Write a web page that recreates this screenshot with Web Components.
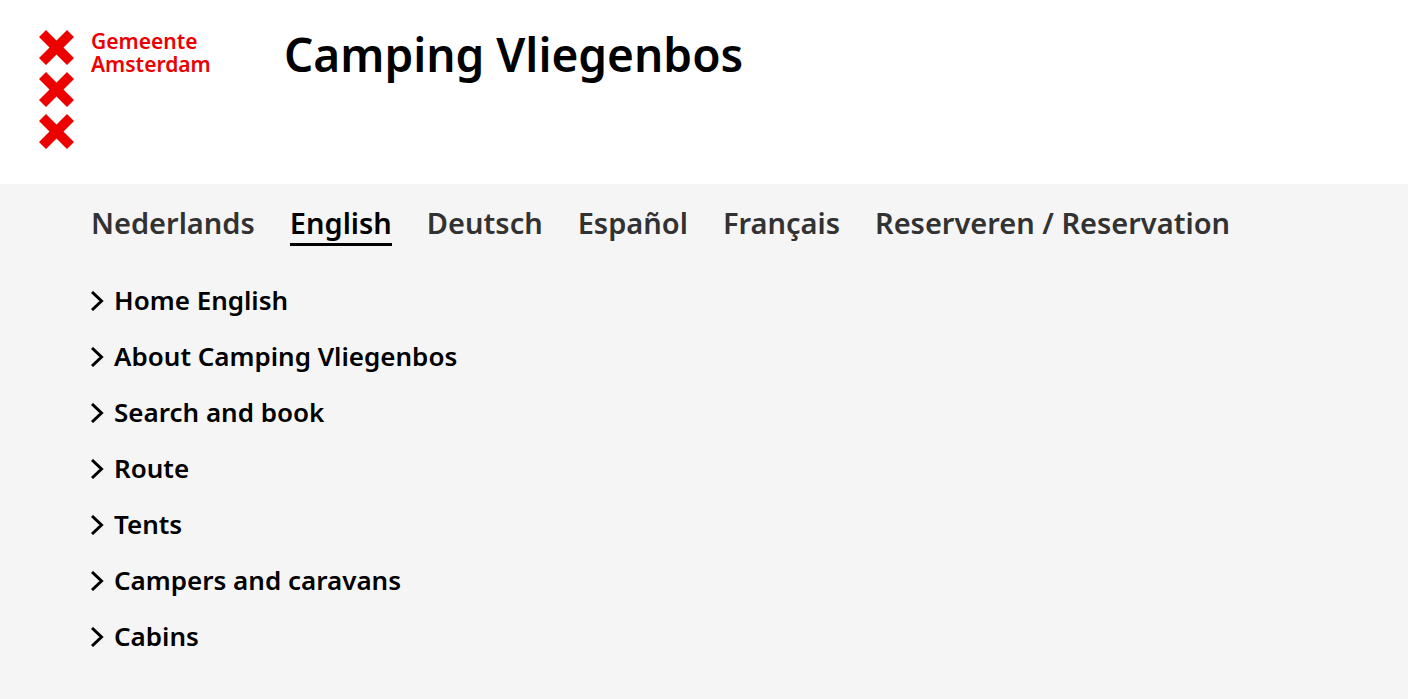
<!DOCTYPE html>
<html lang="en">
<head>
<meta charset="utf-8">
<title>Camping Vliegenbos</title>
<style>
body { margin: 0; background: #f5f5f5; color: #000; font-family: "Noto Sans", sans-serif; font-weight: 600; }
</style>
</head>
<body>
<camping-page></camping-page>
<script>
const define = (name, html) => customElements.define(name, class extends HTMLElement {
  constructor() {
    super();
    const t = document.createElement('template');
    t.innerHTML = html;
    this.attachShadow({ mode: 'open' }).append(t.content.cloneNode(true));
    const link = this.shadowRoot.querySelector('a');
    if (link && this.hasAttribute('current')) link.setAttribute('aria-current', 'page');
  }
});

define('city-logo', `
<style>
  :host { display: block; }
  a { display: flex; gap: 17px; color: #ec0000; text-decoration: none; font-size: 21px; line-height: 23px; }
  svg { display: block; width: 35px; height: 119px; flex: none; }
  .name span { display: block; }
</style>
<a href="#"><svg viewBox="0 0 35 119" fill="#ec0000" aria-hidden="true">
  <path id="x" d="M7 0 17.500 10.500 28 0 35 7 24.500 17.500 35 28 28 35 17.500 24.500 7 35 0 28 10.500 17.500 0 7z"/>
  <use href="#x" y="42"/><use href="#x" y="84"/>
</svg><span class="name"><span>Gemeente</span> <span>Amsterdam</span></span></a>`);

define('page-header', `
<style>
  :host { display: flex; align-items: flex-start; background: #fff; box-sizing: border-box; min-height: 184px; padding: 30px 39px; }
  city-logo { width: 245px; flex: none; }
  h1 { margin: 0; font-size: 46px; line-height: 48px; font-weight: 600; }
</style>
<city-logo></city-logo><h1><slot></slot></h1>`);

define('language-link', `
<style>
  :host { display: block; }
  a { display: block; color: #323232; text-decoration: none; font-size: 29px; line-height: 40px; border-bottom: 3px solid transparent; }
  a[aria-current] { color: #000; border-color: #000; }
</style>
<a href="#"><slot></slot></a>`);

define('menu-link', `
<style>
  :host { display: block; }
  a { display: flex; align-items: center; gap: 10px; color: #000; text-decoration: none; font-size: 26px; line-height: 30px; }
  svg { flex: none; width: 13px; height: 20px; }
  span { padding-bottom: 2px; }
</style>
<a href="#"><svg viewBox="0 0 13 20" fill="none" stroke="#000" stroke-width="3" aria-hidden="true"><path d="M1 1 10.500 10 1 19"/></svg><span><slot></slot></span></a>`);

define('camping-page', `
<style>
  :host { display: block; }
  nav { padding: 0 91px; }
  .languages { display: flex; flex-wrap: wrap; gap: 35px; padding-top: 19px; }
  .menu { display: grid; gap: 24px; padding-top: 39px; padding-bottom: 46px; }
</style>
<page-header>Camping Vliegenbos</page-header>
<nav class="languages" aria-label="Language">
  <language-link>Nederlands</language-link><language-link current>English</language-link><language-link>Deutsch</language-link><language-link>Español</language-link><language-link>Français</language-link><language-link>Reserveren / Reservation</language-link>
</nav>
<nav class="menu" aria-label="Main">
  <menu-link>Home English</menu-link><menu-link>About Camping Vliegenbos</menu-link><menu-link>Search and book</menu-link><menu-link>Route</menu-link><menu-link>Tents</menu-link><menu-link>Campers and caravans</menu-link><menu-link>Cabins</menu-link>
</nav>`);
</script>
</body>
</html>
